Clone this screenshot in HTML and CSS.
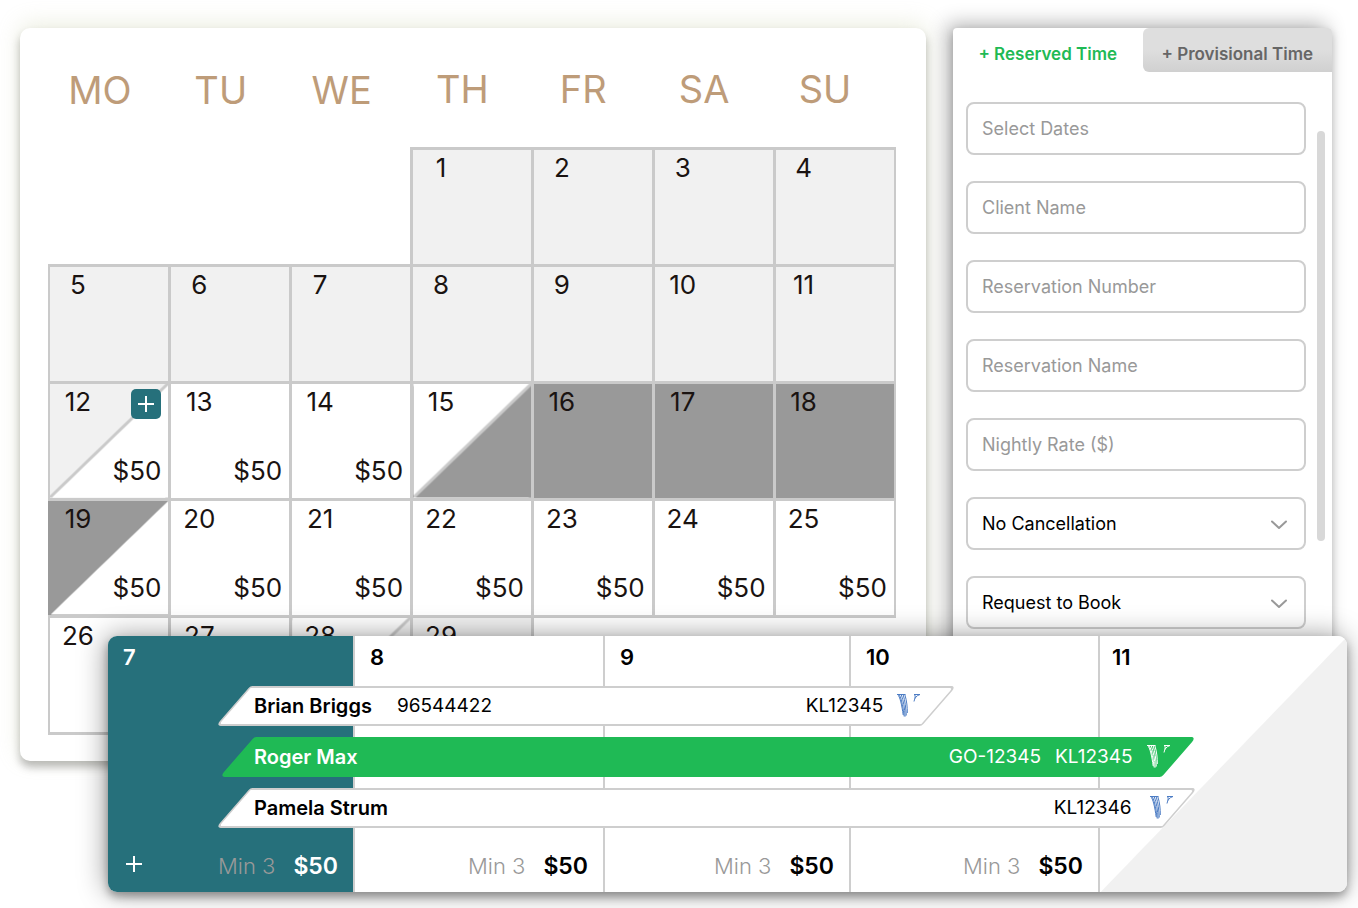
FILE: index.html
```html
<!DOCTYPE html>
<html lang="en">
<head>
<meta charset="utf-8">
<title>Reservation calendar</title>
<link rel="stylesheet" href="styles.css">
</head>
<body>
<svg class="defs" aria-hidden="true">
  <symbol id="logo" viewBox="0 0 24 23">
    <g fill="none" stroke="currentColor" stroke-width="1">
      <path d="M0.5 0.5C3 2 5 12 6.2 21M2.3 0.5C5 6 6.2 14 7.2 22.5M4.2 0.5C6.6 7 7.6 14 8.2 22.5M6.1 0.5C8.2 7 8.8 14 9.3 21.5M7.8 0.5C9.8 7 10.4 13 10.3 19"/>
      <path d="M0 0.5H8.5M17 7.5C17.5 4 19.5 1.5 23 0.5M17 0.5H23M17 0.5C18.5 1 18.5 2.5 17.6 4.5"/>
    </g>
  </symbol>
  <symbol id="chevron" viewBox="0 0 16 10">
    <path d="M1 1.5L8 8L15 1.5" fill="none" stroke="#999" stroke-width="2" stroke-linecap="round" stroke-linejoin="round"/>
  </symbol>
  <symbol id="plus" viewBox="0 0 16 16">
    <path d="M8 0V16M0 8H16" fill="none" stroke="currentColor" stroke-width="2"/>
  </symbol>
</svg>

<main class="stage">
  <div class="top">
    <section class="card" aria-label="Month">
      <table class="month">
        <thead>
          <tr><th>MO</th><th>TU</th><th>WE</th><th>TH</th><th>FR</th><th>SA</th><th>SU</th></tr>
        </thead>
        <tbody>
          <tr>
            <td class="none"></td><td class="none"></td><td class="none"></td>
            <td class="past"><div class="cell"><span class="day">1</span></div></td>
            <td class="past"><div class="cell"><span class="day">2</span></div></td>
            <td class="past"><div class="cell"><span class="day">3</span></div></td>
            <td class="past"><div class="cell"><span class="day">4</span></div></td>
          </tr>
          <tr>
            <td class="past"><div class="cell"><span class="day">5</span></div></td>
            <td class="past"><div class="cell"><span class="day">6</span></div></td>
            <td class="past"><div class="cell"><span class="day">7</span></div></td>
            <td class="past"><div class="cell"><span class="day">8</span></div></td>
            <td class="past"><div class="cell"><span class="day">9</span></div></td>
            <td class="past"><div class="cell"><span class="day">10</span></div></td>
            <td class="past"><div class="cell"><span class="day">11</span></div></td>
          </tr>
          <tr>
            <td class="today"><div class="cell"><div class="cell-top"><span class="day">12</span><button class="add" aria-label="Add"><svg class="icon-plus"><use href="#plus"/></svg></button></div><span class="price">$50</span></div></td>
            <td><div class="cell"><span class="day">13</span><span class="price">$50</span></div></td>
            <td><div class="cell"><span class="day">14</span><span class="price">$50</span></div></td>
            <td class="check-in"><div class="cell"><span class="day">15</span></div></td>
            <td class="booked"><div class="cell"><span class="day">16</span></div></td>
            <td class="booked"><div class="cell"><span class="day">17</span></div></td>
            <td class="booked"><div class="cell"><span class="day">18</span></div></td>
          </tr>
          <tr>
            <td class="check-out"><div class="cell"><span class="day">19</span><span class="price">$50</span></div></td>
            <td><div class="cell"><span class="day">20</span><span class="price">$50</span></div></td>
            <td><div class="cell"><span class="day">21</span><span class="price">$50</span></div></td>
            <td><div class="cell"><span class="day">22</span><span class="price">$50</span></div></td>
            <td><div class="cell"><span class="day">23</span><span class="price">$50</span></div></td>
            <td><div class="cell"><span class="day">24</span><span class="price">$50</span></div></td>
            <td><div class="cell"><span class="day">25</span><span class="price">$50</span></div></td>
          </tr>
          <tr>
            <td><div class="cell"><span class="day">26</span></div></td>
            <td><div class="cell"><span class="day">27</span></div></td>
            <td class="last"><div class="cell"><span class="day">28</span></div></td>
            <td class="past"><div class="cell"><span class="day">29</span></div></td>
            <td class="none"></td><td class="none"></td><td class="none"></td>
          </tr>
        </tbody>
      </table>
    </section>

    <section class="panel" aria-label="New booking">
      <div class="tabs">
        <button class="tab tab-active">+ Reserved Time</button>
        <button class="tab tab-idle">+ Provisional Time</button>
      </div>
      <div class="panel-body">
        <form class="form">
          <input class="field" type="text" placeholder="Select Dates" aria-label="Select Dates">
          <input class="field" type="text" placeholder="Client Name" aria-label="Client Name">
          <input class="field" type="text" placeholder="Reservation Number" aria-label="Reservation Number">
          <input class="field" type="text" placeholder="Reservation Name" aria-label="Reservation Name">
          <input class="field" type="text" placeholder="Nightly Rate ($)" aria-label="Nightly Rate ($)">
          <div class="select-wrap">
            <select class="field" aria-label="Cancellation"><option>No Cancellation</option></select>
            <svg class="chevron"><use href="#chevron"/></svg>
          </div>
          <div class="select-wrap">
            <select class="field" aria-label="Booking type"><option>Request to Book</option></select>
            <svg class="chevron"><use href="#chevron"/></svg>
          </div>
        </form>
        <div class="thumb"></div>
      </div>
    </section>
  </div>

  <section class="timeline" aria-label="Timeline">
    <div class="column column-current">
      <span class="date">7</span>
      <div class="rate"><button class="rate-add" aria-label="Add"><svg class="icon-plus"><use href="#plus"/></svg></button><span class="min">Min 3</span><strong class="amount">$50</strong></div>
    </div>
    <div class="column"><span class="date">8</span><div class="rate"><span class="min">Min 3</span><strong class="amount">$50</strong></div></div>
    <div class="column"><span class="date">9</span><div class="rate"><span class="min">Min 3</span><strong class="amount">$50</strong></div></div>
    <div class="column"><span class="date">10</span><div class="rate"><span class="min">Min 3</span><strong class="amount">$50</strong></div></div>
    <div class="column column-end"><span class="date">11</span></div>
    <div class="bars">
      <div class="bar" style="width:57%">
        <strong class="guest">Brian Briggs</strong><span>96544422</span>
        <span class="code">KL12345</span><svg class="logo"><use href="#logo"/></svg>
      </div>
      <div class="bar bar-green" style="width:76%">
        <strong class="guest">Roger Max</strong>
        <span class="code">GO-12345</span><span>KL12345</span><svg class="logo"><use href="#logo"/></svg>
      </div>
      <div class="bar bar-long" style="width:76.4%">
        <strong class="guest">Pamela Strum</strong>
        <span class="code">KL12346</span><svg class="logo"><use href="#logo"/></svg>
      </div>
    </div>
  </section>
</main>
</body>
</html>
```
FILE: styles.css
```css
* { box-sizing: border-box; }

body {
  margin: 0;
  background: #fff;
  color: #000;
  font-family: Inter, "Liberation Sans", sans-serif;
}

button, input, select { font: inherit; }
button { border: 0; padding: 0; background: none; cursor: pointer; }
.defs { position: absolute; width: 0; height: 0; }

.stage { padding: 28px 0 16px; }

.top {
  display: grid;
  grid-template-columns: minmax(0, 906fr) minmax(0, 379fr);
  gap: 27px;
  padding: 0 26px 0 20px;
}

/* Month calendar */
.card {
  padding: 0 30px 26px 28px;
  border-radius: 10px;
  background: #fff;
  box-shadow: 0 -4px 22px rgba(190, 195, 150, 0.3), 0 6px 8px rgba(0, 0, 0, 0.28);
}

.month {
  width: 100%;
  table-layout: fixed;
  border-collapse: collapse;
  color: #1a1311;
}

.month th {
  height: 120px;
  padding: 3px 19px 0 0;
  color: #be9c79;
  font-size: 38px;
  font-weight: 400;
  text-align: center;
}

.month td {
  height: 117px;
  padding: 0;
  border: 3px solid #cacaca;
}

.month td:first-child { border-left-width: 2px; }
.month td:last-child { border-right-width: 2px; }
.month .none { border: 0; }
.month .past { background: #f1f1f1; }
.month .booked { background: #999; }
.month .today { background: linear-gradient(to bottom right, #f1f1f1 calc(50% - 2px), #cacaca calc(50% - 1px), #cacaca calc(50% + 1px), #fff calc(50% + 2px)); }
.month .check-in { background: linear-gradient(to bottom right, #fff calc(50% - 2px), #cacaca calc(50% - 1px), #cacaca calc(50% + 1px), #999 calc(50% + 2px)); }
.month .check-out { border-left-color: #999; background: linear-gradient(to bottom right, #999 50%, #fff calc(50% + 1px)); }
.month .last { background: linear-gradient(to bottom right, #fff calc(50% - 2px), #cacaca calc(50% - 1px), #cacaca calc(50% + 1px), #f1f1f1 calc(50% + 2px)); }

.cell {
  display: flex;
  flex-direction: column;
  justify-content: space-between;
  height: 114px;
  padding: 2px 7px 11px 0;
  font-size: 26px;
  line-height: 32px;
}

.cell-top { display: flex; justify-content: space-between; }
.day { width: 56px; text-align: center; }
.price { text-align: right; }

.add {
  display: grid;
  place-items: center;
  width: 30px;
  height: 30px;
  margin-top: 3px;
  border-radius: 5px;
  background: #26707b;
  color: #fff;
}

.icon-plus { width: 16px; height: 16px; }

/* Booking form */
.panel {
  border-radius: 4px;
  background: #fff;
  box-shadow: -6px -4px 20px rgba(0, 0, 0, 0.3), 0 4px 8px rgba(0, 0, 0, 0.2);
}

.tabs { display: grid; grid-template-columns: 1fr 1fr; height: 44px; }
.tab { padding-top: 8px; font-size: 17px; font-weight: 600; white-space: nowrap; }
.tab-active { color: #1fba55; }
.tab-idle {
  border-radius: 6px 4px 0 6px;
  background: linear-gradient(#dedede 50%, #d0d0d0);
  color: #666;
}

.panel-body {
  display: flex;
  gap: 11px;
  padding: 30px 7px 29px 13px;
}

.form { display: flex; flex: 1; flex-direction: column; gap: 26px; min-width: 0; }

.field {
  display: block;
  width: 100%;
  height: 53px;
  padding: 0 14px;
  border: 2px solid #cecece;
  border-radius: 8px;
  background: #fff;
  color: #000;
  font-size: 18px;
  appearance: none;
}

.field::placeholder { color: #999; opacity: 1; }
.select-wrap { position: relative; }
.chevron { position: absolute; top: 23px; right: 19px; width: 16px; height: 10px; pointer-events: none; }
.thumb { width: 8px; height: 410px; margin-top: 29px; border-radius: 4px; background: #d8d8d8; }

/* Timeline laid over the two cards above */
.timeline {
  position: relative;
  display: grid;
  grid-template-columns: 247fr 250fr 246fr 249fr 247fr;
  height: 256px;
  margin: -125px 11px 0 108px;
  border-radius: 9px;
  background: #fff;
  box-shadow: 0 5px 8px rgba(0, 0, 0, 0.3), -2px 0 28px rgba(0, 0, 0, 0.4);
}

.column {
  display: flex;
  flex-direction: column;
  justify-content: space-between;
  padding: 7px 15px 12px 15px;
  border-right: 2px solid #cecece;
  font-size: 22px;
  line-height: 28px;
}

.column-current { border-radius: 9px 0 0 9px; background: #26707b; color: #fff; }
.column-end {
  padding-left: 12px;
  border-right: 0;
  border-radius: 0 9px 9px 0;
  background: linear-gradient(to bottom right, #fff 50%, #f1f1f1 calc(50% + 1px));
}

.date { font-weight: 600; }
.rate { display: flex; justify-content: flex-end; align-items: center; gap: 18px; }
.rate-add { display: grid; margin: 0 auto 4px 3px; color: #fff; }
.min { color: #999; font-weight: 300; }
.amount { font-size: 23px; font-weight: 600; }

.bars {
  position: absolute;
  inset: 50px 0 auto;
  display: flex;
  flex-direction: column;
  gap: 11px;
}

.bar {
  position: relative;
  display: flex;
  align-items: center;
  gap: 14px;
  height: 40px;
  margin-left: 125px;
  padding: 0 18px 0 21px;
  font-size: 19px;
  white-space: nowrap;
  isolation: isolate;
}

.bar::before {
  content: "";
  position: absolute;
  inset: 0;
  z-index: -1;
  border: 2px solid #cecece;
  border-radius: 2px 5px 2px 5px;
  background: #fff;
  transform: skewX(-41deg);
}

.guest { margin-right: 11px; font-size: 20px; font-weight: 600; }
.code { margin-left: auto; }
.logo { flex: none; width: 24px; height: 23px; color: #4c7cc4; }

.bar-green { margin-left: 129px; padding: 0 8px 0 17px; color: #fff; }
.bar-green::before { border-color: #1fba55; background: #1fba55; }
.bar-green .logo { color: #fff; }
.bar-long { gap: 18px; padding-right: 6px; }
```
